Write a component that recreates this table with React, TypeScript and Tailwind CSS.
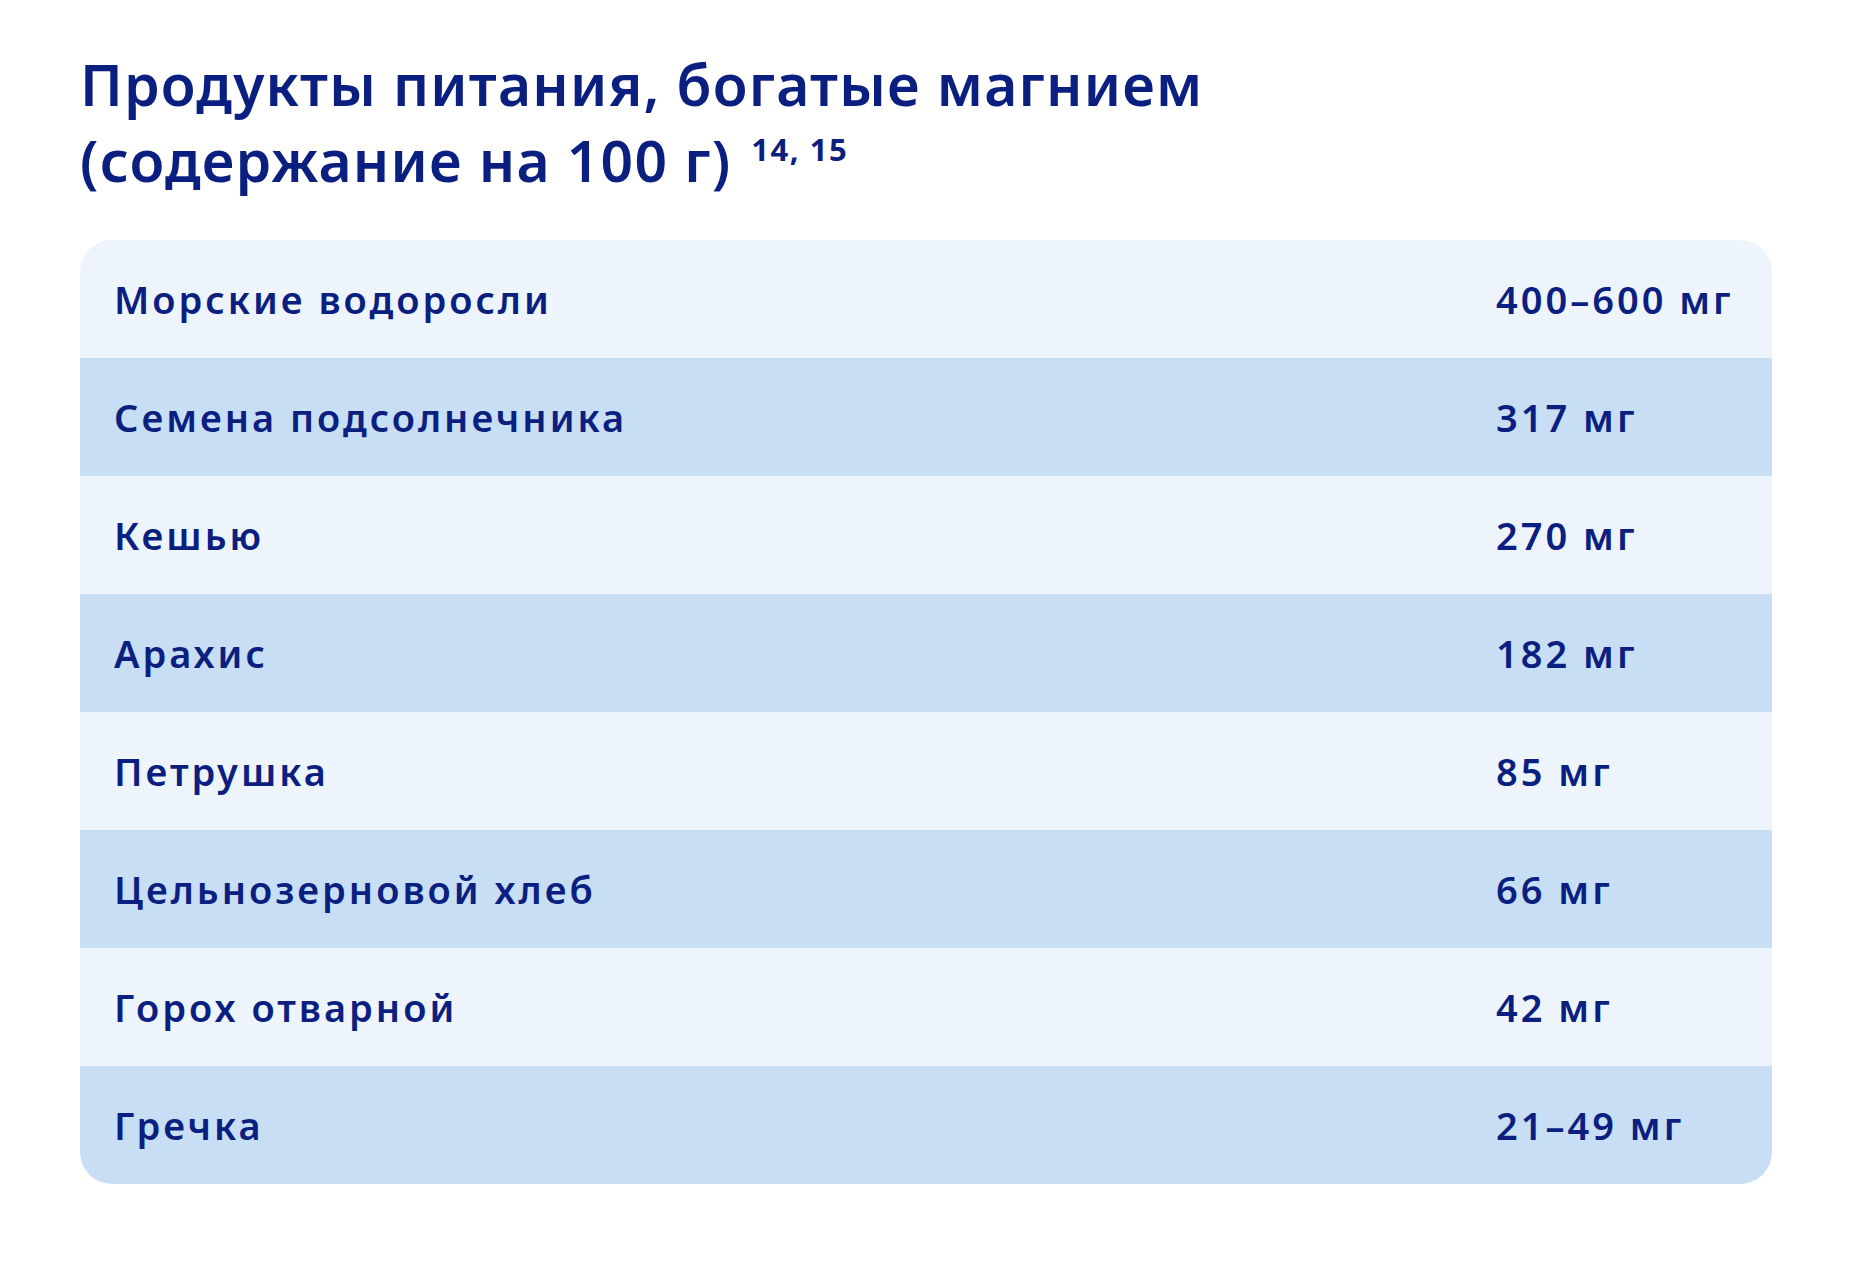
const rows = [
  { name: "Морские водоросли", value: "400–600 мг" },
  { name: "Семена подсолнечника", value: "317 мг" },
  { name: "Кешью", value: "270 мг" },
  { name: "Арахис", value: "182 мг" },
  { name: "Петрушка", value: "85 мг" },
  { name: "Цельнозерновой хлеб", value: "66 мг" },
  { name: "Горох отварной", value: "42 мг" },
  { name: "Гречка", value: "21–49 мг" },
];

export default function App() {
  return (
    <div className="min-h-screen bg-white px-[80px] pt-[46px] pb-[80px] text-[#0b1f80]"
      style={{ fontFamily: '"Noto Sans", "DejaVu Sans", sans-serif' }}>
      <h1 className="text-[57px] leading-[76px] font-semibold tracking-[1.2px]">
        Продукты питания, богатые магнием
        <br />
        (содержание на 100 г)
        <sup className="ml-[20px] text-[31px] font-bold align-[6px] leading-none tracking-[1.5px]">14, 15</sup>
      </h1>

      {/* table */}
      <div className="mt-[42px] rounded-[32px] overflow-hidden">
        {rows.map((r, i) => (
          <div key={r.name}
            className={`grid grid-cols-[1fr_276px] items-center h-[118px] pl-[34px] text-[38px] font-semibold tracking-[3px] ${i % 2 === 0 ? "bg-[#eef4fc]" : "bg-[#c7def5]"}`}>
            <span>{r.name}</span>
            <span>{r.value}</span>
          </div>
        ))}
      </div>
    </div>
  );
}
